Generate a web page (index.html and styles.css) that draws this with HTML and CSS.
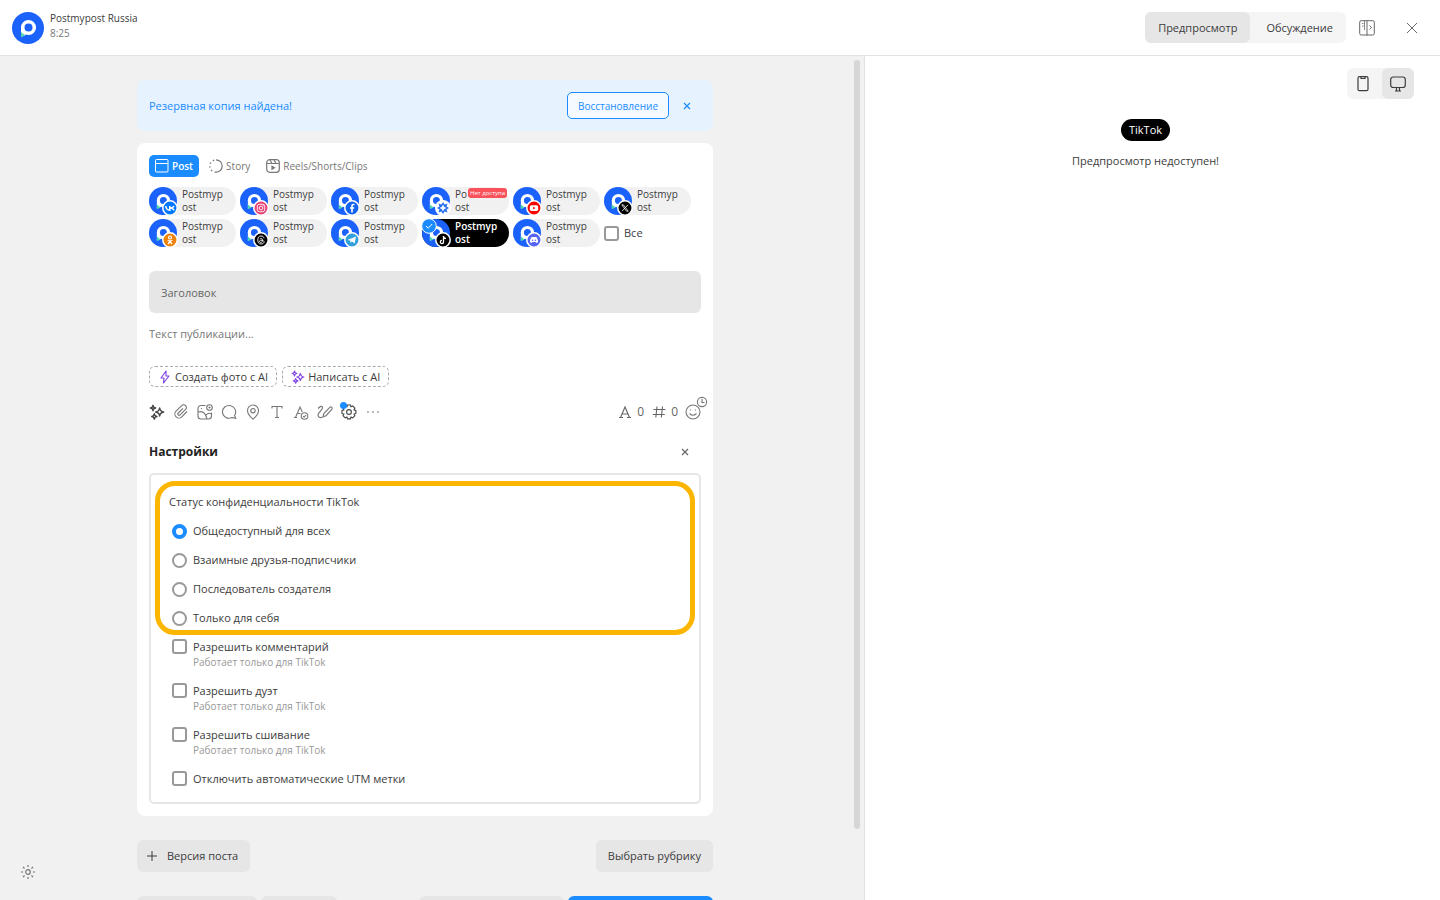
FILE: index.html
```html
<!DOCTYPE html>
<html lang="ru">
<head>
    <meta charset="UTF-8">
    <meta name="viewport" content="width=device-width, initial-scale=1.0">
    <title>Postmypost</title>
    <link rel="stylesheet" href="styles.css">
</head>
<body>

    <!-- Shared icons -->
    <svg class="sprite" aria-hidden="true">
        <symbol id="logo" viewBox="0 0 32 32">
            <circle cx="16" cy="16" r="16" fill="#1b62fb"/>
            <path d="M9 15v9.500q4-.5 5-2.500z" fill="#fff"/>
            <path d="M9 20v5q3-.5 4-2z" fill="#4fd6b0"/>
            <circle cx="16.500" cy="15.500" r="5.800" fill="#1b62fb" stroke="#fff" stroke-width="3.600"/>
        </symbol>
        <symbol id="close" viewBox="0 0 12 12">
            <path d="M1 1l10 10M11 1L1 11" fill="none" stroke="currentColor"/>
        </symbol>
        <symbol id="sparkles" viewBox="0 0 18 18">
            <path d="M12 4.500q.6 4 4.500 4.500-3.900.6-4.500 4.500-.6-3.900-4.500-4.500 3.900-.5 4.500-4.500zM4.500 1.500q.3 2.700 3 3-2.700.3-3 3-.3-2.700-3-3 2.700-.3 3-3zM6 11q.3 2.700 3 3-2.700.3-3 3-.3-2.700-3-3 2.700-.3 3-3z" fill="none" stroke="currentColor" stroke-width="1.600" stroke-linejoin="round"/>
        </symbol>
    </svg>

    <div class="app">

        <!-- Header -->
        <header class="header">
            <svg class="header-logo"><use href="#logo"/></svg>
            <div class="account">
                <div>Postmypost Russia</div>
                <time class="account-time">8:25</time>
            </div>
            <nav class="segmented">
                <button class="segment active">Предпросмотр</button>
                <button class="segment">Обсуждение</button>
            </nav>
            <button class="icon-button panel-button" aria-label="Панель">
                <svg width="16" height="16" viewBox="0 0 16 16" fill="none" stroke="currentColor"><rect x=".7" y=".7" width="14.600" height="14.300" rx="1.500"/><path d="M8 .5v15"/><path d="M3 3.500h1.500M3 6h1.500M5.500 1v9" stroke-width=".8"/><path d="M10.500 5.500l2 2-2 2"/></svg>
            </button>
            <button class="icon-button" aria-label="Закрыть"><svg width="12" height="12"><use href="#close"/></svg></button>
        </header>

        <main class="content">

            <!-- Editor -->
            <section class="editor">
                <div class="editor-scroll">
                    <div class="column">

                        <div class="notice">
                            <p>Резервная копия найдена!</p>
                            <button class="restore">Восстановление</button>
                            <button class="icon-button notice-close" aria-label="Закрыть"><svg width="8" height="8" viewBox="0 0 8 8" stroke="currentColor" stroke-width="1.200"><path d="M1 1l6 6M7 1L1 7"/></svg></button>
                        </div>

                        <div class="card">
                            <div class="tabs">
                                <button class="tab active">
                                    <svg width="14" height="14" viewBox="0 0 14 14" fill="none" stroke="currentColor"><rect x=".5" y=".5" width="12.500" height="12.500" rx="1"/><path d="M.5 4.500h12.500"/></svg>
                                    Post
                                </button>
                                <button class="tab">
                                    <svg width="14" height="14" viewBox="0 0 14 14" fill="none" stroke="currentColor" stroke-width="1.200"><path d="M7 .8a6.200 6.200 0 0 1 0 12.400"/><path d="M7 13.200A6.200 6.200 0 0 1 7 .8" stroke-dasharray="1.500 2.400"/></svg>
                                    Story
                                </button>
                                <button class="tab">
                                    <svg width="14" height="14" viewBox="0 0 14 14" fill="none" stroke="currentColor" stroke-width="1.200"><rect x=".7" y=".7" width="12.600" height="12.600" rx="3"/><path d="M1 4.500h12M4 1l2 3.500M8 1l2 3.500"/><path d="M6 7.200v3l2.500-1.500z" fill="currentColor"/></svg>
                                    Reels/Shorts/Clips
                                </button>
                            </div>

                            <div class="channels">
                                <button class="channel">
                                    <svg class="avatar"><use href="#logo"/></svg>
                                    <svg class="network" viewBox="0 0 16 16"><circle cx="8" cy="8" r="7.200" fill="#07f" stroke="#fff" stroke-width="1.500"/><path d="M3.800 6q.5 4.200 4 4.200V6M12 6q-.8 1.900-3.800 2.100 2.800.2 4 2.300" fill="none" stroke="#fff" stroke-width="1.500"/></svg>
                                    <span>Postmyp<br>ost</span>
                                </button>
                                <button class="channel">
                                    <svg class="avatar"><use href="#logo"/></svg>
                                    <svg class="network" viewBox="0 0 16 16"><circle cx="8" cy="8" r="7.200" fill="#e64475" stroke="#fff" stroke-width="1.500"/><rect x="4.300" y="4.300" width="7.400" height="7.400" rx="2" fill="none" stroke="#fff" stroke-width=".9"/><circle cx="8" cy="8" r="1.800" fill="none" stroke="#fff" stroke-width=".9"/><circle cx="10.200" cy="5.800" r=".5" fill="#fff"/></svg>
                                    <span>Postmyp<br>ost</span>
                                </button>
                                <button class="channel">
                                    <svg class="avatar"><use href="#logo"/></svg>
                                    <svg class="network" viewBox="0 0 16 16"><circle cx="8" cy="8" r="7.200" fill="#1464f0" stroke="#fff" stroke-width="1.500"/><path d="M10.500 4.500H9.300q-1.300 0-1.300 1.300V12.500M6 8h4.200" fill="none" stroke="#fff" stroke-width="1.600"/></svg>
                                    <span>Postmyp<br>ost</span>
                                </button>
                                <button class="channel">
                                    <svg class="avatar"><use href="#logo"/></svg>
                                    <svg class="network" viewBox="0 0 16 16"><circle cx="8" cy="8" r="8" fill="#fff"/><path d="M8 2l1.600 2.500 2.900-.9-.9 2.900L14 8l-2.400 1.500.9 2.900-2.900-.9L8 14l-1.600-2.500-2.900.9.9-2.900L2 8l2.400-1.500-.9-2.900 2.900.9z" fill="#2c73ee"/><path d="M8 5.500l.7 1.800 1.800.7-1.800.7L8 10.500l-.7-1.800L5.500 8l1.800-.7z" fill="#fff" stroke="#fff"/></svg>
                                    <span>Po<b class="no-access">Нет доступа</b><br>ost</span>
                                </button>
                                <button class="channel">
                                    <svg class="avatar"><use href="#logo"/></svg>
                                    <svg class="network" viewBox="0 0 16 16"><circle cx="8" cy="8" r="7.200" fill="#f00" stroke="#fff" stroke-width="1.500"/><rect x="3.800" y="5.200" width="8.400" height="5.800" rx="1.700" fill="#fff"/><path d="M7.200 6.700v2.800L9.500 8z" fill="#f00"/></svg>
                                    <span>Postmyp<br>ost</span>
                                </button>
                                <button class="channel">
                                    <svg class="avatar"><use href="#logo"/></svg>
                                    <svg class="network" viewBox="0 0 16 16"><circle cx="8" cy="8" r="7.200" fill="#000" stroke="#fff" stroke-width="1.500"/><path d="M4.800 4.800h1.600l4.800 6.400H9.600zM11 4.800L5 11.200" fill="none" stroke="#fff" stroke-width=".8"/></svg>
                                    <span>Postmyp<br>ost</span>
                                </button>
                                <button class="channel">
                                    <svg class="avatar"><use href="#logo"/></svg>
                                    <svg class="network" viewBox="0 0 16 16"><circle cx="8" cy="8" r="7.200" fill="#ee8208" stroke="#fff" stroke-width="1.500"/><circle cx="8" cy="5.500" r="1.500" fill="none" stroke="#fff" stroke-width="1.200"/><path d="M5.700 8.300q2.300 1.400 4.600 0M6 12l2-2.500 2 2.500" fill="none" stroke="#fff" stroke-width="1.300"/></svg>
                                    <span>Postmyp<br>ost</span>
                                </button>
                                <button class="channel">
                                    <svg class="avatar"><use href="#logo"/></svg>
                                    <svg class="network" viewBox="0 0 16 16"><circle cx="8" cy="8" r="7.200" fill="#000" stroke="#fff" stroke-width="1.500"/><path d="M11 6.300C10.600 4.500 9.500 4 8 4 5.800 4 4.800 5.500 4.800 8s1 4 3.200 4c1.800 0 3-.8 3-2.200 0-1.800-4.500-2.300-4.500-.4 0 1.600 3.200 1.400 3.200-1.200C9.700 6.600 7.500 6 6.800 7" fill="none" stroke="#fff" stroke-width=".9"/></svg>
                                    <span>Postmyp<br>ost</span>
                                </button>
                                <button class="channel">
                                    <svg class="avatar"><use href="#logo"/></svg>
                                    <svg class="network" viewBox="0 0 16 16"><circle cx="8" cy="8" r="7.200" fill="#32a0da" stroke="#fff" stroke-width="1.500"/><path d="M3.500 8l8.500-3.500-1.300 7-2.700-2-1.300 1.300-.5-2.300z" fill="#fff"/></svg>
                                    <span>Postmyp<br>ost</span>
                                </button>
                                <button class="channel selected">
                                    <svg class="avatar"><use href="#logo"/></svg>
                                    <svg class="network" viewBox="0 0 16 16"><circle cx="8" cy="8" r="7.200" fill="#000" stroke="#fff" stroke-width="1.500"/><path d="M8.500 4v6a1.600 1.600 0 1 1-1.600-1.600M8.500 4.300q.4 2 2.500 2.200" fill="none" stroke="#fff" stroke-width="1.300"/></svg>
                                    <svg class="check" viewBox="0 0 16 16"><circle cx="8" cy="8" r="7.300" fill="#1a8cff" stroke="#fff"/><path d="M5 8l2.200 2.200L11.200 6" fill="none" stroke="#fff"/></svg>
                                    <span>Postmyp<br>ost</span>
                                </button>
                                <button class="channel">
                                    <svg class="avatar"><use href="#logo"/></svg>
                                    <svg class="network" viewBox="0 0 16 16"><circle cx="8" cy="8" r="7.200" fill="#5865f2" stroke="#fff" stroke-width="1.500"/><path d="M5.300 5.200L7 4.900h2l1.700.3q1.500 2.300 1.300 5l-1.700.9-.7-1H6.400l-.7 1-1.700-.9q-.2-2.700 1.300-5z" fill="#fff"/><circle cx="6.600" cy="8.200" r=".8" fill="#5865f2"/><circle cx="9.400" cy="8.200" r=".8" fill="#5865f2"/></svg>
                                    <span>Postmyp<br>ost</span>
                                </button>
                                <label class="all"><input type="checkbox">Все</label>
                            </div>

                            <input class="title-input" type="text" placeholder="Заголовок" aria-label="Заголовок">
                            <textarea class="text-input" rows="1" placeholder="Текст публикации..." aria-label="Текст публикации"></textarea>

                            <div class="ai-buttons">
                                <button class="ai">
                                    <svg width="14" height="14" viewBox="-1 0 12 14" fill="none" stroke="currentColor" stroke-width="1.200" stroke-linejoin="round"><path d="M6 1L1 8h3l-.5 5L9 6H6z"/></svg>
                                    Создать фото с AI
                                </button>
                                <button class="ai">
                                    <svg width="14" height="14"><use href="#sparkles"/></svg>
                                    Написать с AI
                                </button>
                            </div>

                            <!-- Toolbar -->
                            <div class="toolbar">
                                <button class="tool dark" aria-label="AI"><svg><use href="#sparkles"/></svg></button>
                                <button class="tool" aria-label="Файл"><svg viewBox="0 0 16 16"><path d="M14 7.500l-5.200 5.300a4 4 0 0 1-5.800-5.600l5.700-5.600a2.700 2.700 0 0 1 3.900 3.800l-5.500 5.500a1.300 1.300 0 0 1-1.900-1.900L10 4.400"/></svg></button>
                                <button class="tool" aria-label="Фото"><svg viewBox="0 0 16 16"><path d="M8.500 1.500H4a3 3 0 0 0-3 3V12a3 3 0 0 0 3 3h7.500a3 3 0 0 0 3-3V8.500M1.200 8q6.800-2 8.800 6.800M9 11q2.500-3 5.500-1M4 4.500h1"/><circle cx="12.500" cy="3.500" r="2.800"/><path d="M12.500 2.500v2M11.500 3.500h2"/></svg></button>
                                <button class="tool" aria-label="Комментарий"><svg viewBox="0 0 16 16"><path d="M11 13.600A6.600 6.400 0 1 1 13.500 11.500l1.200 2.700z"/></svg></button>
                                <button class="tool" aria-label="Место"><svg viewBox="0 0 16 16"><path d="M8 15.200Q2.500 10.500 2.500 6.500a5.500 5.500 0 0 1 11 0q0 4-5.500 8.700z"/><circle cx="8" cy="6.700" r="2.200"/></svg></button>
                                <button class="tool" aria-label="Текст"><svg viewBox="0 0 16 16"><path d="M3 4.500V2.500h10v2M8 2.500v11M6 13.500h4"/></svg></button>
                                <button class="tool" aria-label="Проверка"><svg viewBox="0 0 16 16"><path d="M1 13.500h3M2.500 13.500L7 3l2.300 5M4.200 9.500H7.500"/><circle cx="11.500" cy="12" r="3.300"/><path d="M10 12l1.100 1.200 2-2.200"/></svg></button>
                                <button class="tool" aria-label="Подпись"><svg viewBox="0 0 16 16"><path d="M1 4.500q3.500-3.500 4.500-1.500C6.500 5.500.5 8.500 1 11.500q1.300 3.200 4.500 1.500"/><path d="M6 12.800l.8-3.300 6-6.200q1.200-.9 2 0t0 2.100L9 11.700z"/></svg></button>
                                <button class="tool settings" aria-label="Настройки"><svg viewBox="0 0 16 16"><path d="M6.500 1h3l.5 1.800 1.700-.9 2.200 2.200-.9 1.700 1.900.6v3l-1.900.6.9 1.700-2.200 2.200-1.700-.9-.5 1.900h-3l-.6-1.900-1.700.9L2 11.700l.9-1.700L1 9.400v-3l1.900-.6L2 4.100l2.200-2.200 1.700.9z"/><circle cx="8" cy="8" r="2.400"/></svg></button>
                                <button class="tool" aria-label="Ещё"><svg viewBox="0 0 16 16"><path d="M2 8h2M7 8h2M12 8h2"/></svg></button>
                                <div class="counters">
                                    <svg viewBox="0 0 16 16"><path d="M2 13.500h4M10 13.500h4M3.500 13.500L8 3l4.500 10.500M5.200 10h5.600"/></svg>
                                    <span>0</span>
                                    <svg viewBox="0 0 16 16"><path d="M6 2.500l-1.200 11M11.500 2.500l-1.200 11M2.500 5.500h12M1.800 10.500h12"/></svg>
                                    <span>0</span>
                                    <button class="tool emoji" aria-label="Эмодзи">
                                        <svg viewBox="0 0 16 16"><circle cx="8" cy="8" r="7"/><path d="M5.500 5.500v1M10.500 5.500v1M4.500 9.500q3.500 3.500 7 0"/></svg>
                                        <svg class="clock" viewBox="0 0 12 12"><circle cx="6" cy="6" r="4.600"/><path d="M6 3v3.500h2.500"/></svg>
                                    </button>
                                </div>
                            </div>

                            <!-- Settings -->
                            <div class="settings-head">
                                <h2>Настройки</h2>
                                <button class="icon-button" aria-label="Закрыть"><svg width="8" height="8" viewBox="0 0 8 8" stroke="currentColor" stroke-width="1.200"><path d="M1 1l6 6M7 1L1 7"/></svg></button>
                            </div>
                            <div class="settings-box">
                                <div class="privacy" role="radiogroup" aria-labelledby="privacy-title">
                                    <p id="privacy-title">Статус конфиденциальности TikTok</p>
                                    <label class="option"><input type="radio" name="privacy" checked>Общедоступный для всех</label>
                                    <label class="option"><input type="radio" name="privacy">Взаимные друзья-подписчики</label>
                                    <label class="option"><input type="radio" name="privacy">Последователь создателя</label>
                                    <label class="option"><input type="radio" name="privacy">Только для себя</label>
                                </div>
                                <div class="permissions">
                                    <label class="permission"><input type="checkbox"><span>Разрешить комментарий<small>Работает только для TikTok</small></span></label>
                                    <label class="permission"><input type="checkbox"><span>Разрешить дуэт<small>Работает только для TikTok</small></span></label>
                                    <label class="permission"><input type="checkbox"><span>Разрешить сшивание<small>Работает только для TikTok</small></span></label>
                                    <label class="permission"><input type="checkbox"><span>Отключить автоматические UTM метки</span></label>
                                </div>
                            </div>
                        </div>

                        <div class="actions">
                            <button class="button version"><svg width="10" height="10" viewBox="0 0 10 10"><path d="M5 0v10M0 5h10" stroke="currentColor"/></svg>Версия поста</button>
                            <button class="button">Выбрать рубрику</button>
                        </div>
                        <div class="actions footer-actions">
                            <button class="button wide" aria-label="Дата"></button>
                            <button class="button time" aria-label="Время"></button>
                            <button class="button draft" aria-label="Черновик"></button>
                            <button class="button primary" aria-label="Опубликовать"></button>
                        </div>
                    </div>
                </div>
                <div class="scrollbar"><div class="thumb"></div></div>
                <button class="theme" aria-label="Тема">
                    <svg width="14" height="14" viewBox="0 0 14 14" fill="none" stroke="currentColor" stroke-width="1.200"><circle cx="7" cy="7" r="2.300"/><path d="M7 0v2M7 12v2M0 7h2M12 7h2M2 2l1.500 1.500M10.500 10.500L12 12M12 2l-1.500 1.500M3.500 10.500L2 12"/></svg>
                </button>
            </section>

            <!-- Preview -->
            <aside class="preview">
                <div class="segmented devices">
                    <button class="segment" aria-label="Телефон"><svg width="16" height="16" viewBox="0 0 16 16"><rect x="3" y=".7" width="10" height="14" rx="1.500"/><path d="M6 1v1.500h4V1"/></svg></button>
                    <button class="segment active" aria-label="Компьютер"><svg width="16" height="16" viewBox="0 0 16 16"><rect x=".7" y="1" width="14.600" height="10.500" rx="2.500"/><path d="M6.500 11.500v3.500M9.500 11.500v3.500M5 15h6"/></svg></button>
                </div>
                <span class="badge">TikTok</span>
                <p>Предпросмотр недоступен!</p>
            </aside>
        </main>
    </div>

</body>
</html>
```
FILE: styles.css
```css
* {
    margin: 0;
    padding: 0;
    box-sizing: border-box;
}

body {
    font-family: "Open Sans", "Noto Sans", sans-serif;
    font-size: 11px;
    line-height: 16px;
    color: #3c3c3c;
    background-color: #fff;
}

button,
input,
textarea {
    font: inherit;
    color: inherit;
    border: none;
    background: none;
}

button {
    cursor: pointer;
}

svg {
    flex-shrink: 0;
}

.sprite {
    display: none;
}

.app {
    display: flex;
    flex-direction: column;
    height: 100vh;
}

/* Header */
.header {
    display: flex;
    align-items: center;
    height: 56px;
    padding: 0 22px 0 12px;
    border-bottom: 1px solid #e2e2e2;
    flex-shrink: 0;
}

.header-logo {
    width: 32px;
    height: 32px;
}

.account {
    padding-bottom: 3px;
    margin: 0 auto 0 6px;
    font-size: 10px;
    line-height: 15px;
}

.account-time {
    display: block;
    color: #777;
}

.segmented {
    display: flex;
    border-radius: 6px;
    background-color: #f5f5f5;
}

.segment {
    display: flex;
    align-items: center;
    justify-content: center;
    height: 31px;
    padding: 0 13px;
    border-radius: 6px;
}

.segment.active {
    background-color: #e6e6e6;
}

.segment + .segment {
    margin-left: 3px;
}

.icon-button {
    display: flex;
    color: #666;
}

.panel-button {
    margin: 0 31px 0 13px;
}

.content {
    display: flex;
    flex: 1;
    min-height: 0;
}

/* Editor */
.editor {
    display: flex;
    position: relative;
    width: 60%;
    background-color: #f1f1f1;
}

.editor-scroll {
    flex: 1;
    padding-top: 24px;
    overflow-y: auto;
    scrollbar-width: none;
}

.scrollbar {
    width: 14px;
    padding: 4px;
}

.thumb {
    width: 6px;
    height: 92%;
    border-radius: 3px;
    background-color: #d6d6d6;
}

.theme {
    position: absolute;
    left: 21px;
    bottom: 21px;
    display: flex;
    color: #777;
}

.column {
    max-width: 576px;
    margin: 0 auto;
}

.notice {
    display: flex;
    align-items: center;
    padding: 12px 22px 12px 12px;
    margin-bottom: 12px;
    border-radius: 8px;
    background-color: #e6f2fe;
    color: #1a8cff;
}

.notice p {
    flex: 1;
}

.restore {
    height: 27px;
    padding: 0 10px;
    margin-right: 14px;
    border: 1px solid #1a8cff;
    border-radius: 5px;
    background-color: #f4faff;
    font-size: 10px;
}

.notice-close {
    color: #1a8cff;
}

.card {
    padding: 12px;
    border-radius: 8px;
    background-color: #fff;
}

.tabs {
    display: flex;
    gap: 4px;
    margin-bottom: 10px;
}

.tab {
    display: flex;
    align-items: center;
    gap: 3px;
    height: 22px;
    padding: 0 6px;
    border-radius: 5px;
    font-size: 10px;
    color: #777;
}

.tab.active {
    background-color: #1a8cff;
    color: #fff;
    font-weight: 600;
}

/* Channels */
.channels {
    display: flex;
    flex-wrap: wrap;
    gap: 4px;
    margin-bottom: 24px;
}

.channel {
    display: flex;
    align-items: center;
    gap: 5px;
    position: relative;
    width: 87px;
    height: 28px;
    border-radius: 14px;
    background-color: #f1f1f1;
    font-size: 10px;
    line-height: 13px;
    text-align: left;
    white-space: nowrap;
}

.channel.selected {
    background-color: #000;
    color: #fff;
    font-weight: 600;
}

.avatar {
    width: 28px;
    height: 28px;
}

.network {
    position: absolute;
    left: 13px;
    top: 13px;
    width: 16px;
    height: 16px;
}

.check {
    position: absolute;
    left: -1px;
    top: -1px;
    width: 16px;
    height: 16px;
}

.no-access {
    display: inline-block;
    padding: 0 2px;
    margin-left: 1px;
    border-radius: 3px;
    background-color: #f9525a;
    color: #fff;
    font-size: 6px;
    font-weight: 400;
    line-height: 10px;
    vertical-align: top;
}

.all {
    display: flex;
    align-items: center;
    gap: 5px;
}

/* Check boxes and radios */
input[type="checkbox"],
input[type="radio"] {
    appearance: none;
    flex-shrink: 0;
    width: 15px;
    height: 15px;
    border: 2px solid #999;
    border-radius: 3px;
    background-color: #fff;
}

input[type="radio"] {
    border-radius: 50%;
}

input[type="radio"]:checked {
    border: 4px solid #1a8cff;
}

/* Post fields */
.title-input {
    display: block;
    width: 100%;
    height: 42px;
    padding: 0 12px;
    border-radius: 6px;
    background-color: #e6e6e6;
}

.text-input {
    display: block;
    width: 100%;
    height: 16px;
    margin: 13px 0 24px;
    resize: none;
    overflow: hidden;
}

::placeholder {
    color: #777;
    opacity: 1;
}

.title-input::placeholder {
    color: #666;
}

.ai-buttons {
    display: flex;
    gap: 5px;
}

.ai {
    display: flex;
    align-items: center;
    gap: 3px;
    height: 21px;
    padding: 0 8px;
    border: 1px dashed #aaa;
    border-radius: 6px;
}

.ai svg {
    color: #8247e5;
}

/* Toolbar */
.toolbar {
    display: flex;
    align-items: center;
    gap: 8px;
    margin-top: 17px;
}

.toolbar svg {
    width: 16px;
    height: 16px;
    fill: none;
    stroke: currentColor;
    stroke-width: 1.1;
}

.tool {
    display: flex;
    position: relative;
    color: #777;
}

.tool.dark,
.tool.settings {
    color: #444;
}

.tool.settings::before {
    content: "";
    position: absolute;
    left: -1px;
    top: -2px;
    width: 7px;
    height: 7px;
    border-radius: 50%;
    background-color: #1a8cff;
}

.counters {
    display: flex;
    align-items: center;
    gap: 4px;
    margin-left: auto;
    font-size: 12px;
    color: #666;
}

.counters span {
    margin-right: 3px;
}

.toolbar .clock {
    position: absolute;
    left: 11px;
    top: -8px;
    width: 12px;
    height: 12px;
}

/* Settings */
.settings-head {
    display: flex;
    align-items: center;
    justify-content: space-between;
    padding-right: 12px;
    margin: 22px 0 11px;
}

.settings-head h2 {
    font-size: 12px;
    line-height: 20px;
    color: #222;
}

.settings-box {
    padding: 6px 4px;
    border: 2px solid #e6e6e6;
    border-radius: 5px;
}

.privacy {
    padding: 8px 9px 4px;
    border: 5px solid #fdb600;
    border-radius: 20px;
}

.option {
    display: flex;
    align-items: center;
    gap: 6px;
    padding-left: 3px;
    margin-top: 13px;
}

.permissions {
    display: flex;
    flex-direction: column;
    gap: 14px;
    padding: 4px 17px 9px;
}

.permission {
    display: flex;
    align-items: flex-start;
    gap: 6px;
}

.permission small {
    display: block;
    font-size: 10px;
    line-height: 14px;
    color: #999;
}

/* Bottom buttons */
.actions {
    display: flex;
    justify-content: space-between;
    margin-top: 24px;
}

.button {
    display: flex;
    align-items: center;
    gap: 10px;
    height: 32px;
    padding: 0 12px;
    border-radius: 6px;
    background-color: #e6e6e6;
}

.version {
    padding-left: 10px;
}

.footer-actions {
    gap: 4px;
    padding-bottom: 24px;
}

.wide {
    width: 120px;
}

.time {
    width: 76px;
    margin-right: auto;
}

.draft,
.primary {
    width: 145px;
}

.primary {
    background-color: #1a8cff;
}

/* Preview */
.preview {
    display: flex;
    flex-direction: column;
    align-items: center;
    width: 40%;
    padding: 12px 26px 12px 12px;
    border-left: 1px solid #e2e2e2;
}

.devices {
    align-self: flex-end;
    margin-bottom: 20px;
}

.devices .segment {
    padding: 0 8px;
}

.devices svg {
    fill: none;
    stroke: currentColor;
    stroke-width: 1.2;
}

.badge {
    padding: 3px 8px;
    margin-bottom: 12px;
    border-radius: 11px;
    background-color: #000;
    color: #fff;
}
```
